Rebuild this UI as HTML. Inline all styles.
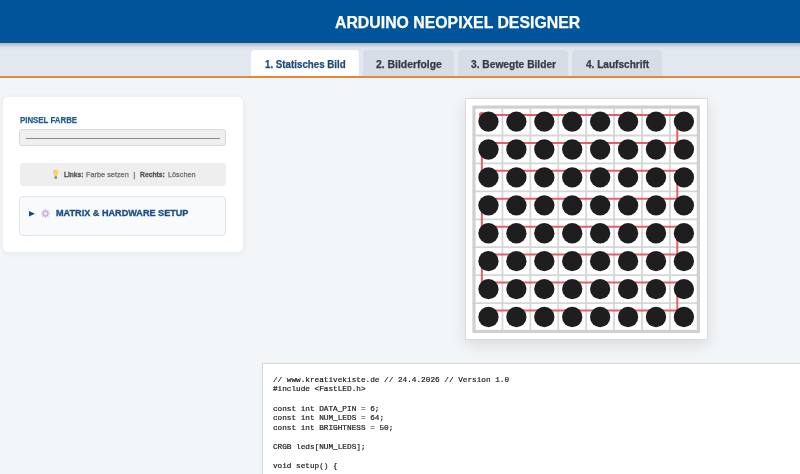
<!DOCTYPE html>
<html><head><meta charset="utf-8">
<style>
*{margin:0;padding:0;box-sizing:border-box}
html,body{width:800px;height:474px;overflow:hidden}
body{background:#f2f6f9;font-family:"Liberation Sans",sans-serif;position:relative}
.tx{position:absolute;line-height:1;white-space:nowrap;transform-origin:0 0;z-index:10;-webkit-text-stroke:0.25px currentColor}
.hdr{position:absolute;left:-20px;top:0;width:840px;height:43px;background:#00559a;box-shadow:0 2px 4px rgba(0,0,0,.25);z-index:3}
.tabbar{position:absolute;left:0;top:43px;width:800px;height:33px;background:#e2e8f0;z-index:1}
.oline{position:absolute;left:0;top:76.3px;width:800px;height:2px;background:#e6883a;z-index:4}
.tab{position:absolute;top:50px;height:27px;background:#d7dde6;border-radius:4px 4px 0 0;z-index:2}
.tab.act{background:#fff;z-index:3}
.tt{font-size:10.6px;font-weight:bold;color:#343a42;top:58.5px}
.panel{position:absolute;left:3.1px;top:97.3px;width:240.4px;height:154.3px;background:#fff;border-radius:5.5px;box-shadow:0 1px 6px rgba(0,0,0,.07)}
.cin{position:absolute;left:19px;top:129px;width:207.3px;height:16.8px;background:#efefef;border:1px solid #d9d9d9;border-radius:3px}
.cin i{position:absolute;left:6.3px;top:7.5px;width:193.5px;height:1.5px;background:#8a8a8a}
.hint{position:absolute;left:19.5px;top:163px;width:206px;height:22.5px;background:#eeeeee;border-radius:3px}
.ht{font-size:8px;top:171.2px;color:#6a6a6a}
.ht.b{font-weight:bold;color:#505050;-webkit-text-stroke:0.3px #505050}
.det{position:absolute;left:19.2px;top:196px;width:207.3px;height:39.5px;background:#f8fafc;border:1px solid #e1e3e6;border-radius:4px}
.card{position:absolute;left:464.8px;top:98px;width:243.2px;height:242px;background:#fff;border:1px solid #d8dbdf;box-shadow:0 5px 15px rgba(0,0,0,.11)}
.code{position:absolute;left:261.6px;top:363.3px;width:600px;height:200px;background:#fff;border:1.2px solid #d6dadf;box-shadow:0 0 4px rgba(0,0,0,.04)}
.code pre{position:absolute;left:10.3px;top:11.6px;height:97.2px;overflow:hidden;font-family:"Liberation Mono",monospace;font-size:7.72px;line-height:9.58px;color:#1a1a1a;-webkit-text-stroke:0.2px #1a1a1a}
#root{position:absolute;left:0;top:0;width:800px;height:474px;overflow:hidden;filter:blur(0.35px)}
</style></head><body><div id="root">
<div class="hdr"></div>
<div class="tx" style="left:334.6px;top:14.04px;font-size:16.2px;font-weight:bold;color:#fff;transform:scaleX(0.978)">ARDUINO NEOPIXEL DESIGNER</div>
<div class="tabbar"></div>
<div class="oline"></div>
<div class="tab act" style="left:251.2px;width:107.8px"></div>
<div class="tab" style="left:362.5px;width:91.5px"></div>
<div class="tab" style="left:457.5px;width:110.5px"></div>
<div class="tab" style="left:571.5px;width:90.5px"></div>
<div class="tx tt" style="left:265.25px;color:#1d4a76;transform:scaleX(0.92)">1. Statisches Bild</div>
<div class="tx tt" style="left:376px;transform:scaleX(0.98)">2. Bilderfolge</div>
<div class="tx tt" style="left:471px;transform:scaleX(0.963)">3. Bewegte Bilder</div>
<div class="tx tt" style="left:585.5px;transform:scaleX(0.95)">4. Laufschrift</div>

<div class="panel"></div>
<div class="tx" style="left:19.9px;top:115.1px;font-size:9.6px;font-weight:bold;color:#225b8b;transform:scaleX(0.82)">PINSEL FARBE</div>
<div class="cin"><i></i></div>
<div class="hint"></div>
<svg style="position:absolute;left:50px;top:166px;z-index:10" width="12" height="14" viewBox="0 0 12 14"><path d="M5.75 3.4 C7.5 3.4 8.5 4.7 8.5 6.3 C8.5 7.9 7.2 8.6 6.9 10.3 L4.6 10.3 C4.3 8.6 3 7.9 3 6.3 C3 4.7 4 3.4 5.75 3.4Z" fill="#f1d56e"/><rect x="4.6" y="10.3" width="2.3" height="2.4" fill="#7d7d7d"/></svg>
<div class="tx ht b" style="left:63.75px;transform:scaleX(0.82)">Links:</div>
<div class="tx ht" style="left:86px;transform:scaleX(0.915)">Farbe setzen</div>
<div class="tx ht" style="left:133.3px">|</div>
<div class="tx ht b" style="left:140px;transform:scaleX(0.845)">Rechts:</div>
<div class="tx ht" style="left:167.75px;transform:scaleX(0.911)">Löschen</div>
<div class="det"></div>
<svg style="position:absolute;left:29px;top:210.5px;z-index:10" width="6" height="6" viewBox="0 0 6 6"><path d="M0 0 L6 2.75 L0 5.5Z" fill="#1d4a78"/></svg>
<svg style="position:absolute;left:40.8px;top:208.8px;z-index:10" width="9" height="9" viewBox="0 0 9 9"><path d="M7.39 3.68 L8.65 3.87 L8.65 5.13 L7.39 5.32 L7.12 5.96 L7.88 6.99 L6.99 7.88 L5.96 7.12 L5.32 7.39 L5.13 8.65 L3.87 8.65 L3.68 7.39 L3.04 7.12 L2.01 7.88 L1.12 6.99 L1.88 5.96 L1.61 5.32 L0.35 5.13 L0.35 3.87 L1.61 3.68 L1.88 3.04 L1.12 2.01 L2.01 1.12 L3.04 1.88 L3.68 1.61 L3.87 0.35 L5.13 0.35 L5.32 1.61 L5.96 1.88 L6.99 1.12 L7.88 2.01 L7.12 3.04Z" fill="#c5b3da"/><circle cx="4.5" cy="4.5" r="1.6" fill="#f4f0f8"/></svg>
<div class="tx" style="left:55.8px;top:208.6px;font-size:9.3px;font-weight:bold;color:#1d4f85;transform:scaleX(0.98);-webkit-text-stroke:0.35px #1d4f85">MATRIX &amp; HARDWARE SETUP</div>

<div class="card"></div>
<svg id="mx" style="position:absolute;left:0;top:0" width="800" height="474"><rect x="472.5" y="105.6" width="227.36" height="227.36" fill="#fff"></rect><line x1="502.42" y1="105.6" x2="502.42" y2="332.96000000000004" stroke="#d6d6d6" stroke-width="1.8"></line><line x1="472.5" y1="135.51999999999998" x2="699.86" y2="135.51999999999998" stroke="#d6d6d6" stroke-width="1.8"></line><line x1="530.34" y1="105.6" x2="530.34" y2="332.96000000000004" stroke="#d6d6d6" stroke-width="1.8"></line><line x1="472.5" y1="163.44" x2="699.86" y2="163.44" stroke="#d6d6d6" stroke-width="1.8"></line><line x1="558.26" y1="105.6" x2="558.26" y2="332.96000000000004" stroke="#d6d6d6" stroke-width="1.8"></line><line x1="472.5" y1="191.36" x2="699.86" y2="191.36" stroke="#d6d6d6" stroke-width="1.8"></line><line x1="586.1800000000001" y1="105.6" x2="586.1800000000001" y2="332.96000000000004" stroke="#d6d6d6" stroke-width="1.8"></line><line x1="472.5" y1="219.28" x2="699.86" y2="219.28" stroke="#d6d6d6" stroke-width="1.8"></line><line x1="614.1" y1="105.6" x2="614.1" y2="332.96000000000004" stroke="#d6d6d6" stroke-width="1.8"></line><line x1="472.5" y1="247.20000000000002" x2="699.86" y2="247.20000000000002" stroke="#d6d6d6" stroke-width="1.8"></line><line x1="642.02" y1="105.6" x2="642.02" y2="332.96000000000004" stroke="#d6d6d6" stroke-width="1.8"></line><line x1="472.5" y1="275.12" x2="699.86" y2="275.12" stroke="#d6d6d6" stroke-width="1.8"></line><line x1="669.94" y1="105.6" x2="669.94" y2="332.96000000000004" stroke="#d6d6d6" stroke-width="1.8"></line><line x1="472.5" y1="303.03999999999996" x2="699.86" y2="303.03999999999996" stroke="#d6d6d6" stroke-width="1.8"></line><rect x="474" y="107.1" width="224.36" height="224.36" fill="none" stroke="#d0d0d0" stroke-width="3.2"></rect><path d="M481.85999999999996 114.96000000000001 L677.3 114.96000000000001 L677.3 142.88 L481.85999999999996 142.88 L481.85999999999996 170.8 L677.3 170.8 L677.3 198.72000000000003 L481.85999999999996 198.72 L481.85999999999996 226.64 L677.3 226.64000000000001 L677.3 254.56 L481.85999999999996 254.55999999999997 L481.85999999999996 282.47999999999996 L677.3 282.48 L677.3 310.40000000000003 L481.85999999999996 310.4" fill="none" stroke="#e25f6c" stroke-width="2"></path><circle cx="481.85999999999996" cy="114.96000000000001" r="3" fill="#e25f6c"></circle><circle cx="488.46" cy="121.56" r="10.15" fill="#1e1e1e"></circle><circle cx="516.38" cy="121.56" r="10.15" fill="#1e1e1e"></circle><circle cx="544.3" cy="121.56" r="10.15" fill="#1e1e1e"></circle><circle cx="572.22" cy="121.56" r="10.15" fill="#1e1e1e"></circle><circle cx="600.14" cy="121.56" r="10.15" fill="#1e1e1e"></circle><circle cx="628.06" cy="121.56" r="10.15" fill="#1e1e1e"></circle><circle cx="655.98" cy="121.56" r="10.15" fill="#1e1e1e"></circle><circle cx="683.9" cy="121.56" r="10.15" fill="#1e1e1e"></circle><circle cx="488.46" cy="149.48" r="10.15" fill="#1e1e1e"></circle><circle cx="516.38" cy="149.48" r="10.15" fill="#1e1e1e"></circle><circle cx="544.3" cy="149.48" r="10.15" fill="#1e1e1e"></circle><circle cx="572.22" cy="149.48" r="10.15" fill="#1e1e1e"></circle><circle cx="600.14" cy="149.48" r="10.15" fill="#1e1e1e"></circle><circle cx="628.06" cy="149.48" r="10.15" fill="#1e1e1e"></circle><circle cx="655.98" cy="149.48" r="10.15" fill="#1e1e1e"></circle><circle cx="683.9" cy="149.48" r="10.15" fill="#1e1e1e"></circle><circle cx="488.46" cy="177.4" r="10.15" fill="#1e1e1e"></circle><circle cx="516.38" cy="177.4" r="10.15" fill="#1e1e1e"></circle><circle cx="544.3" cy="177.4" r="10.15" fill="#1e1e1e"></circle><circle cx="572.22" cy="177.4" r="10.15" fill="#1e1e1e"></circle><circle cx="600.14" cy="177.4" r="10.15" fill="#1e1e1e"></circle><circle cx="628.06" cy="177.4" r="10.15" fill="#1e1e1e"></circle><circle cx="655.98" cy="177.4" r="10.15" fill="#1e1e1e"></circle><circle cx="683.9" cy="177.4" r="10.15" fill="#1e1e1e"></circle><circle cx="488.46" cy="205.32" r="10.15" fill="#1e1e1e"></circle><circle cx="516.38" cy="205.32" r="10.15" fill="#1e1e1e"></circle><circle cx="544.3" cy="205.32" r="10.15" fill="#1e1e1e"></circle><circle cx="572.22" cy="205.32" r="10.15" fill="#1e1e1e"></circle><circle cx="600.14" cy="205.32" r="10.15" fill="#1e1e1e"></circle><circle cx="628.06" cy="205.32" r="10.15" fill="#1e1e1e"></circle><circle cx="655.98" cy="205.32" r="10.15" fill="#1e1e1e"></circle><circle cx="683.9" cy="205.32" r="10.15" fill="#1e1e1e"></circle><circle cx="488.46" cy="233.24" r="10.15" fill="#1e1e1e"></circle><circle cx="516.38" cy="233.24" r="10.15" fill="#1e1e1e"></circle><circle cx="544.3" cy="233.24" r="10.15" fill="#1e1e1e"></circle><circle cx="572.22" cy="233.24" r="10.15" fill="#1e1e1e"></circle><circle cx="600.14" cy="233.24" r="10.15" fill="#1e1e1e"></circle><circle cx="628.06" cy="233.24" r="10.15" fill="#1e1e1e"></circle><circle cx="655.98" cy="233.24" r="10.15" fill="#1e1e1e"></circle><circle cx="683.9" cy="233.24" r="10.15" fill="#1e1e1e"></circle><circle cx="488.46" cy="261.15999999999997" r="10.15" fill="#1e1e1e"></circle><circle cx="516.38" cy="261.15999999999997" r="10.15" fill="#1e1e1e"></circle><circle cx="544.3" cy="261.15999999999997" r="10.15" fill="#1e1e1e"></circle><circle cx="572.22" cy="261.15999999999997" r="10.15" fill="#1e1e1e"></circle><circle cx="600.14" cy="261.15999999999997" r="10.15" fill="#1e1e1e"></circle><circle cx="628.06" cy="261.15999999999997" r="10.15" fill="#1e1e1e"></circle><circle cx="655.98" cy="261.15999999999997" r="10.15" fill="#1e1e1e"></circle><circle cx="683.9" cy="261.15999999999997" r="10.15" fill="#1e1e1e"></circle><circle cx="488.46" cy="289.08000000000004" r="10.15" fill="#1e1e1e"></circle><circle cx="516.38" cy="289.08000000000004" r="10.15" fill="#1e1e1e"></circle><circle cx="544.3" cy="289.08000000000004" r="10.15" fill="#1e1e1e"></circle><circle cx="572.22" cy="289.08000000000004" r="10.15" fill="#1e1e1e"></circle><circle cx="600.14" cy="289.08000000000004" r="10.15" fill="#1e1e1e"></circle><circle cx="628.06" cy="289.08000000000004" r="10.15" fill="#1e1e1e"></circle><circle cx="655.98" cy="289.08000000000004" r="10.15" fill="#1e1e1e"></circle><circle cx="683.9" cy="289.08000000000004" r="10.15" fill="#1e1e1e"></circle><circle cx="488.46" cy="317" r="10.15" fill="#1e1e1e"></circle><circle cx="516.38" cy="317" r="10.15" fill="#1e1e1e"></circle><circle cx="544.3" cy="317" r="10.15" fill="#1e1e1e"></circle><circle cx="572.22" cy="317" r="10.15" fill="#1e1e1e"></circle><circle cx="600.14" cy="317" r="10.15" fill="#1e1e1e"></circle><circle cx="628.06" cy="317" r="10.15" fill="#1e1e1e"></circle><circle cx="655.98" cy="317" r="10.15" fill="#1e1e1e"></circle><circle cx="683.9" cy="317" r="10.15" fill="#1e1e1e"></circle></svg>

<div class="code"><pre>// www.kreativekiste.de // 24.4.2026 // Version 1.0
#include &lt;FastLED.h&gt;

const int DATA_PIN = 6;
const int NUM_LEDS = 64;
const int BRIGHTNESS = 50;

CRGB leds[NUM_LEDS];

void setup() {
  FastLED.addLeds&lt;WS2812B, DATA_PIN, GRB&gt;(leds, NUM_LEDS);
</pre></div>

</div></body></html>
